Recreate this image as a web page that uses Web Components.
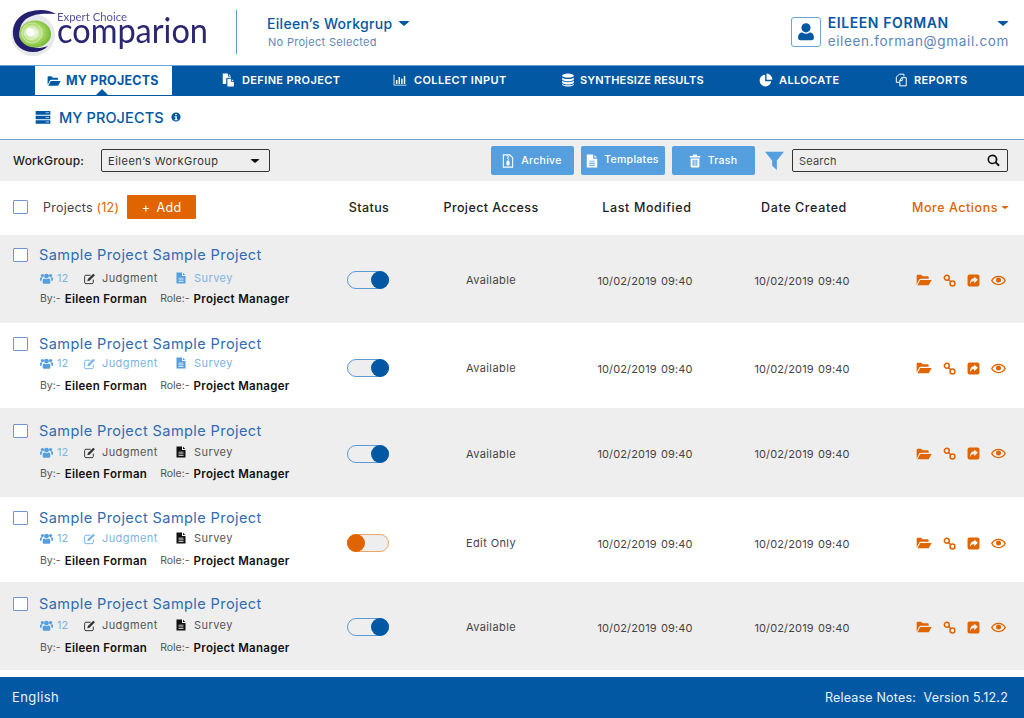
<!DOCTYPE html>
<html lang="en">
<head>
<meta charset="utf-8">
<title>My Projects</title>
<style>
  html, body { margin: 0; padding: 0; background: #fff; }
  body { width: 1024px; height: 718px; overflow: hidden; font-family: Inter, "Open Sans", sans-serif; color: #222; }
</style>
</head>
<body>
<app-header></app-header>
<app-nav>
  <nav-item icon="folder" active>MY PROJECTS</nav-item>
  <nav-item icon="copy">DEFINE PROJECT</nav-item>
  <nav-item icon="bars">COLLECT INPUT</nav-item>
  <nav-item icon="database" style="gap:5px;letter-spacing:.15px">SYNTHESIZE RESULTS</nav-item>
  <nav-item icon="pie" style="gap:6px">ALLOCATE</nav-item>
  <nav-item icon="reports" style="gap:6px">REPORTS</nav-item>
</app-nav>
<page-title>MY PROJECTS</page-title>
<tool-bar></tool-bar>
<list-header></list-header>
<project-row style="--h:88px;--pad:10px;--meta:6px;--by:7px;--shift:2px" shaded judgment="plain" survey="blue" status="Available"></project-row>
<project-row style="--h:85px;--pad:11px;--meta:2px;--by:9px;--shift:5px" judgment="blue" survey="blue" status="Available"></project-row>
<project-row style="--h:89px;--pad:13px;--meta:4px;--by:8px;--shift:2px" shaded judgment="plain" survey="plain" status="Available"></project-row>
<project-row style="--h:85px;--pad:11px;--meta:3px;--by:9px;--shift:7px" judgment="blue" survey="plain" status="Edit Only" off></project-row>
<project-row style="--h:88px;--pad:12px;--meta:4px;--by:9px;--shift:2px" shaded judgment="plain" survey="plain" status="Available"></project-row>
<app-footer></app-footer>

<script>
const ICONS = {
  folder: '<path d="M1 19V5.500A1.500 1.500 0 0 1 2.500 4h5L10 6.500h7.500A1.500 1.500 0 0 1 19 8v2H7a2.500 2.500 0 0 0-2.200 1.300z"/><path d="M6.500 12H23.500l-4.500 8H2z"/>',
  copy: '<path d="M3 1h9v5h5v2h-6a2 2 0 0 0-2 2v9H3z"/><path d="M13.500 1.500l3 3h-3z"/><path d="M11 10h6v5h5v8H11z"/><path d="M18.500 10.500l3 3h-3z"/>',
  bars: '<path d="M1 3h1.500v17H23v1.500H1z"/><path d="M5 12h2.500v7H5zM9.500 7H12v12H9.500zM14 10h2.500v9H14zM18.500 5H21v14h-2.500z"/>',
  database: '<ellipse cx="12" cy="4.500" rx="10" ry="3.500"/><path d="M2 7.500c1.500 2 5.500 2.800 10 2.800s8.500-.8 10-2.800v3.500c-1 2-5.500 3-10 3s-9-1-10-3z"/><path d="M2 13c1.500 2 5.500 2.800 10 2.800s8.500-.8 10-2.800v3.500c-1 2-5.500 3-10 3s-9-1-10-3z"/><path d="M2 18.500c1.500 2 5.500 2.500 10 2.500s8.500-.5 10-2.500V20c-1 2.200-5.500 3-10 3s-9-.8-10-3z"/>',
  pie: '<path d="M10.500 3a10 10 0 1 0 10.500 11H10.500z"/><path d="M13 1v10.500h10A10.500 10.500 0 0 0 13 1z"/>',
  reports: '<g fill="none" stroke="currentColor" stroke-width="1.700"><path d="M9 2h8v4M9 2 4 7v9h5"/><path d="M13 8h8v14H10v-9z"/><path d="M10 13h4V8.500"/></g>',
  server: '<path d="M1 3h22v5.500H1zM1 10h22v5.500H1zM1 17h22v5H1z"/><path d="M16 5h5v1.500h-5zM16 12h5v1.500h-5zM16 18.800h5v1.500h-5z" fill="#fff" opacity=".65"/>',
  info: '<path fill-rule="evenodd" d="M12 1a11 11 0 1 0 0 22 11 11 0 0 0 0-22zM10 4.500h4v3.500h-4zM8.500 10h5.500v7.500h2V20H8.500v-2.500h2v-5h-2z"/>',
  user: '<circle cx="12" cy="7" r="5.500"/><path d="M2.500 19c0-4.500 2.500-6.500 5-6.500 1.500 1 3 1.500 4.500 1.500s3-.5 4.500-1.500c2.500 0 5 2 5 6.500 0 2-1.200 3-3 3h-13c-1.800 0-3-1-3-3z"/>',
  zip: '<g fill="none" stroke="currentColor" stroke-width="1.800"><path d="M4 1.500h11l5 5V22.500H4z"/></g><path d="M10 2h2v2h-2zM12 4h2v2h-2zM10 6h2v2h-2zM12 8h2v2h-2zM10 11h4l1 6a3 3 0 0 1-6 0z"/>',
  doc: '<path fill-rule="evenodd" d="M3 1h11v7h7v15H3zM7 11.500h10V13H7zM7 15h10v1.500H7zM7 18.500h10V20H7z"/><path d="M16 1.500 20.500 6H16z"/>',
  trash: '<path d="M9 1h6l1 2.500h5v2.500H3V3.500h5z"/><path fill-rule="evenodd" d="M4.500 7.500h15V21a2 2 0 0 1-2 2h-11a2 2 0 0 1-2-2zM8 10v10h1.800V10zM11.100 10v10h1.800V10zM14.200 10v10H16V10z"/>',
  filter: '<path d="M0 1h24L15 12v12l-6-5.500V12z"/>',
  search: '<path fill-rule="evenodd" d="M10 1a9 9 0 1 0 5.300 16.300l5.700 5.700 2.500-2.500-5.700-5.700A9 9 0 0 0 10 1zm0 3a6 6 0 1 1 0 12 6 6 0 0 1 0-12z"/>',
  users: '<circle cx="12" cy="7.500" r="4.500"/><circle cx="4.500" cy="6.500" r="3"/><circle cx="19.500" cy="6.500" r="3"/><path d="M5 20v-4.500c0-2 1.500-3.500 3.500-3.500 1 .8 2.200 1.200 3.500 1.200s2.500-.4 3.500-1.200c2 0 3.500 1.500 3.500 3.500V20c0 .8-.7 1.500-1.500 1.500h-11C5.700 21.500 5 20.800 5 20z"/><path d="M0 15v-3c0-1.200 1-2.300 2-2.300.8.500 2 .8 3 .7-.5.600-1 1-1.500 2-.5.800-.5 1.800-.5 3.600H1c-.5 0-1-.4-1-1zM24 15v-3c0-1.200-1-2.300-2-2.300-.8.500-2 .8-3 .7.500.600 1 1 1.500 2 .5.800.5 1.800.5 3.600h2c.5 0 1-.4 1-1z"/>',
  edit: '<path fill="none" stroke="currentColor" stroke-width="1.800" d="M19 14v5a2.500 2.500 0 0 1-2.500 2.500h-11A2.500 2.500 0 0 1 3 19V8.500A2.500 2.500 0 0 1 5.500 6H14"/><path d="M19 3l3 3-10 10-4 1 1-4z"/>',
  link: '<g fill="none" stroke="currentColor" stroke-width="2.800"><circle cx="7" cy="7" r="4.500"/><circle cx="17.500" cy="17.500" r="4.500"/><path d="M10.500 10.500l3.500 3.500"/></g>',
  share: '<path fill-rule="evenodd" d="M4.500 1h15A3.500 3.500 0 0 1 23 4.500v15a3.500 3.500 0 0 1-3.500 3.500h-15A3.500 3.500 0 0 1 1 19.500v-15A3.500 3.500 0 0 1 4.500 1zM13.500 4.500v3.500C9 8 5.500 11 5.500 19c1.500-4.500 4-5.500 8-5.500V17l6.500-6.300z"/>',
  eye: '<path fill-rule="evenodd" d="M12 4.500C6.500 4.500 2.500 7.500 0 12c2.500 4.500 6.500 7.500 12 7.500s9.500-3 12-7.500c-2.500-4.500-6.500-7.500-12-7.500zm0 1.800c4 0 7.500 2.200 9.500 5.700-2 3.500-5.500 5.700-9.500 5.700S4.500 15.500 2.500 12c2-3.500 5.500-5.700 9.500-5.700z"/><circle cx="12" cy="11" r="4"/>'
};

class AppIcon extends HTMLElement {
  connectedCallback() {
    const size = this.getAttribute('size') || 14;
    const name = this.getAttribute('name');
    if (!this.shadowRoot) this.attachShadow({ mode: 'open' });
    this.shadowRoot.innerHTML = `
      <style>
        :host { display: inline-flex; flex: none; }
        svg { display: block; fill: currentColor; }
      </style>
      <svg width="${size}" height="${size}" viewBox="0 0 24 24">${ICONS[name] || ''}</svg>
    `;
  }
}
customElements.define('app-icon', AppIcon);

class CaretDown extends HTMLElement {
  constructor() {
    super();
    this.attachShadow({ mode: 'open' }).innerHTML = `
      <style>
        :host { display: inline-block; flex: none; width: 0; height: 0;
          border-left: var(--s, 6px) solid transparent;
          border-right: var(--s, 6px) solid transparent;
          border-top: calc(var(--s, 6px) * .95) solid currentColor; border-radius: 2px; }
      </style>`;
  }
}
customElements.define('caret-down', CaretDown);

class AppHeader extends HTMLElement {
  constructor() {
    super();
    this.attachShadow({ mode: 'open' }).innerHTML = `
      <style>
        :host { display: flex; align-items: stretch; height: 65px; background: #fff; color: #0358a4; box-sizing: border-box; }
        .logo { display: block; flex: none; width: 236px; height: 65px; filter: blur(.35px); }
        .sep { flex: none; width: 1px; height: 44px; margin-top: 10px; background: #5b9bd5; }
        .wg { margin-left: 30px; padding-top: 15px; }
        .wg .name { display: flex; align-items: center; gap: 6px; font-size: 14px; font-weight: 500; line-height: 17px; letter-spacing: .3px; }
        .wg .sub { margin-top: 3px; margin-left: 1px; font-size: 11px; line-height: 14px; color: #5f88b4; letter-spacing: .3px; }
        .me { margin-left: auto; margin-right: 15px; padding-top: 15px; display: flex; gap: 7px; width: 218px; }
        .avatar { box-sizing: border-box; width: 30px; height: 30px; margin-top: 2px; border: 1px solid #6ea3d8; border-radius: 3px; display: flex; align-items: center; justify-content: center; }
        .who { flex: 1; }
        .who .name { display: flex; justify-content: space-between; align-items: center; font-size: 14px; line-height: 16px; font-weight: 600; letter-spacing: .6px; }
        .who .mail { margin-top: 2px; font-size: 13.500px; line-height: 17px; color: #5a88ba; letter-spacing: .66px; white-space: nowrap; }
      </style>
      <svg class="logo" viewBox="0 0 236 65">
        <defs>
          <radialGradient id="g" cx=".42" cy=".46" r=".6">
            <stop offset="0" stop-color="#fff"/>
            <stop offset=".22" stop-color="#e4f3cf"/>
            <stop offset=".6" stop-color="#a5d65f"/>
            <stop offset="1" stop-color="#6fb530"/>
          </radialGradient>
        </defs>
        <ellipse cx="33" cy="35" rx="22" ry="21" fill="#c9cbd0" opacity=".45"/>
        <path d="M56 14C48 9 38 9 28 12 17 16 12 25 13 35c1 10 9 17 20 17 6 0 11-2 15-6-5 2-11 3-17 0-7-3-11-9-11-15 0-7 5-13 12-15 8-3 16-2 24-2z" fill="#241f6e"/>
        <ellipse cx="35" cy="34" rx="16" ry="13.500" fill="url(#g)"/>
        <g fill="none" stroke="#fff" stroke-opacity=".45">
          <circle cx="31" cy="33" r="6.500"/>
          <circle cx="32" cy="33" r="10"/>
        </g>
        <circle cx="30" cy="32" r="4" fill="#fff" opacity=".95"/>
        <text x="57" y="21" font-family="Lato, 'Open Sans', sans-serif" font-size="11.500" fill="#5551a0" textLength="70" lengthAdjust="spacingAndGlyphs">Expert Choice</text>
        <text x="57" y="43" font-family="Lato, 'Open Sans', sans-serif" font-size="34" fill="#2a2672" textLength="151" lengthAdjust="spacingAndGlyphs">comparion</text>
      </svg>
      <div class="sep"></div>
      <div class="wg">
        <div class="name">Eileen’s Workgrup <caret-down style="--s:6px"></caret-down></div>
        <div class="sub">No Project Selected</div>
      </div>
      <div class="me">
        <div class="avatar"><app-icon name="user" size="20"></app-icon></div>
        <div class="who">
          <div class="name"><span>EILEEN FORMAN</span><caret-down style="--s:6px"></caret-down></div>
          <div class="mail">eileen.forman@gmail.com</div>
        </div>
      </div>
    `;
  }
}
customElements.define('app-header', AppHeader);

class AppNav extends HTMLElement {
  constructor() {
    super();
    this.attachShadow({ mode: 'open' }).innerHTML = `
      <style>
        :host { display: grid; grid-template-columns: 186px 172px 168px 198px 135px 1fr; box-sizing: border-box;
          height: 31px; padding-left: 35px; background: #0358a4; border-top: 1px solid #6ea3d8; }
      </style>
      <slot></slot>
    `;
  }
}
customElements.define('app-nav', AppNav);

class NavItem extends HTMLElement {
  constructor() {
    super();
    this.attachShadow({ mode: 'open' }).innerHTML = `
      <style>
        :host { display: flex; align-items: center; gap: 7px; box-sizing: border-box; height: 30px; padding-bottom: 2px; color: #fff; font-size: 11px; font-weight: 600; letter-spacing: .38px; white-space: nowrap; position: relative; }
        :host([active]) { width: 137px; height: 29px; padding: 0 0 0 12px; gap: 5px;
          background: #fff; color: #0358a4; font-size: 12.500px; font-weight: 700; letter-spacing: .2px; }
        :host([active])::after { content: ""; position: absolute; left: 61px; bottom: 0; border: 6px solid transparent; border-top: 0; border-bottom-color: #0358a4; }
      </style>
      <app-icon></app-icon>
      <slot></slot>
    `;
  }
  connectedCallback() {
    const icon = this.shadowRoot.querySelector('app-icon');
    icon.setAttribute('name', this.getAttribute('icon'));
    icon.setAttribute('size', 14);
    icon.connectedCallback();
  }
}
customElements.define('nav-item', NavItem);

class PageTitle extends HTMLElement {
  constructor() {
    super();
    this.attachShadow({ mode: 'open' }).innerHTML = `
      <style>
        :host { display: flex; align-items: center; box-sizing: border-box; height: 44px; padding: 0 0 1px 35px; color: #0358a4;
          border-bottom: 1px solid #6ea3d8; font-size: 14.500px; font-weight: 500; letter-spacing: .1px; }
        .t { margin-left: 8px; }
        .i { margin-left: 7px; margin-top: -1px; }
      </style>
      <app-icon name="server" size="16"></app-icon>
      <span class="t"><slot></slot></span>
      <app-icon class="i" name="info" size="10"></app-icon>
    `;
  }
}
customElements.define('page-title', PageTitle);

class ToolButton extends HTMLElement {
  constructor() {
    super();
    this.attachShadow({ mode: 'open' }).innerHTML = `
      <style>
        :host { display: flex; align-items: center; justify-content: center; gap: 6px; box-sizing: border-box; width: 83px; height: 29px; padding-right: 2px;
          background: #559fde; color: #fff; border-radius: 2px; font-size: 10.500px; font-weight: 500; letter-spacing: .3px; }
        :host([raised]) { width: 84px; gap: 5px; }
        :host([raised]) span { padding-bottom: 2px; }
      </style>
      <app-icon></app-icon>
      <span><slot></slot></span>
    `;
  }
  connectedCallback() {
    const icon = this.shadowRoot.querySelector('app-icon');
    icon.setAttribute('name', this.getAttribute('icon'));
    icon.setAttribute('size', 14);
    icon.connectedCallback();
  }
}
customElements.define('tool-button', ToolButton);

class ToolBar extends HTMLElement {
  constructor() {
    super();
    this.attachShadow({ mode: 'open' }).innerHTML = `
      <style>
        :host { display: flex; align-items: center; box-sizing: border-box; height: 41px; padding: 0 16px 0 13px; background: #eee; }
        label { font-size: 12px; font-weight: 500; letter-spacing: .2px; color: #222; width: 88px; }
        .field { display: flex; align-items: center; box-sizing: border-box; height: 23px; border: 1px solid #333; border-radius: 2px; background: #eee;
          font-size: 11px; color: #444; letter-spacing: .2px; }
        .select { width: 169px; padding: 0 9px 0 6px; justify-content: space-between; color: #333; letter-spacing: .52px; }
        .btns { margin-left: auto; display: flex; gap: 7px; }
        .filter { margin: 0 8px 0 10px; color: #559fde; }
        .search { width: 216px; padding: 0 7px 0 6px; justify-content: space-between; color: #444; }
        .search app-icon { color: #111; }
      </style>
      <label>WorkGroup:</label>
      <div class="field select"><span>Eileen’s WorkGroup</span><caret-down style="--s:5px;color:#111"></caret-down></div>
      <div class="btns">
        <tool-button icon="zip">Archive</tool-button>
        <tool-button icon="doc" raised>Templates</tool-button>
        <tool-button icon="trash">Trash</tool-button>
      </div>
      <app-icon class="filter" name="filter" size="19"></app-icon>
      <div class="field search"><span>Search</span><app-icon name="search" size="13"></app-icon></div>
    `;
  }
}
customElements.define('tool-bar', ToolBar);

class CheckBox extends HTMLElement {
  constructor() {
    super();
    this.attachShadow({ mode: 'open' }).innerHTML = `
      <style>
        :host { display: block; flex: none; box-sizing: border-box; width: 15px; height: 14px; background: #fff; border: 1px solid #6f97d8; border-radius: 1px; }
      </style>`;
  }
}
customElements.define('check-box', CheckBox);

// column widths shared by the header and the rows
const COLS = '340px 58px 186px 126px 188px 1fr';

class ListHeader extends HTMLElement {
  constructor() {
    super();
    this.attachShadow({ mode: 'open' }).innerHTML = `
      <style>
        :host { display: grid; grid-template-columns: ${COLS}; align-items: center; box-sizing: border-box; height: 54px; padding-bottom: 2px; background: #fff; font-size: 12.500px; font-weight: 500; letter-spacing: .4px; color: #222; }
        .left { display: flex; align-items: center; padding-left: 13px; }
        .p { margin-left: 15px; font-weight: 400; color: #444; letter-spacing: .22px; }
        .n { color: #e06400; }
        .add { margin-left: 8px; width: 69px; height: 24px; display: flex; align-items: center; justify-content: center; gap: 6px; background: #e06400; color: #fff; border-radius: 1px; font-size: 12.500px; font-weight: 400; letter-spacing: .4px; }
        .c { text-align: center; white-space: nowrap; }
        .w { letter-spacing: .62px; }
        .more { display: flex; align-items: center; gap: 3px; padding-left: 14px; color: #e06400; white-space: nowrap; letter-spacing: .55px; }
      </style>
      <div class="left"><check-box></check-box><span class="p">Projects <span class="n">(12)</span></span><div class="add"><span>+</span><span>Add</span></div></div>
      <div class="c">Status</div>
      <div class="c">Project Access</div>
      <div class="c w">Last Modified</div>
      <div class="c w">Date Created</div>
      <div class="more">More Actions <caret-down style="--s:4px"></caret-down></div>
    `;
  }
}
customElements.define('list-header', ListHeader);

class ToggleSwitch extends HTMLElement {
  constructor() {
    super();
    this.attachShadow({ mode: 'open' }).innerHTML = `
      <style>
        :host { display: flex; justify-content: flex-end; box-sizing: border-box; width: 42px; height: 18px; margin-right: 2px; border-radius: 9px; background: var(--track, transparent); border: 1px solid #5b9bd5; }
        :host([off]) { justify-content: flex-start; border-color: #eda566; }
        i { display: block; width: 18px; height: 18px; margin: -1px; border-radius: 50%; background: #0358a4; }
        :host([off]) i { background: #e06400; }
      </style>
      <i></i>`;
  }
}
customElements.define('toggle-switch', ToggleSwitch);

class ProjectRow extends HTMLElement {
  connectedCallback() {
    const off = this.hasAttribute('off') ? ' off' : '';
    const judgment = this.getAttribute('judgment');
    const survey = this.getAttribute('survey');
    this.attachShadow({ mode: 'open' }).innerHTML = `
      <style>
        :host { display: grid; grid-template-columns: ${COLS}; box-sizing: border-box; height: var(--h); background: #fff; color: #444; --track: #eee; }
        :host([shaded]) { background: #eee; --track: transparent; }
        .left { padding: var(--pad) 0 0 13px; }
        .title { display: flex; align-items: center; gap: 11px; font-size: 14.500px; line-height: 20px; color: #2f6cb1; letter-spacing: .42px; white-space: nowrap; }
        .meta { display: flex; align-items: center; margin: var(--meta) 0 0 27px; height: 14px; font-size: 11px; letter-spacing: .42px; white-space: nowrap; }
        .meta span.group { display: flex; align-items: center; gap: 6px; }
        .blue { color: #7db3e6; }
        .count { color: #7db3e6; width: 43px; gap: 4px !important; letter-spacing: 0; }
        .count app-icon { color: #559fde; }
        .judgment { width: 92px; }
        .survey { gap: 7px !important; }
        .plain { color: #555; }
        .plain app-icon { color: #333; }
        .survey.plain app-icon { color: #111; }
        .blue app-icon { color: inherit; }
        .survey.blue app-icon { color: #559fde; }
        .by { display: flex; margin: var(--by) 0 0 27px; height: 14px; line-height: 14px; font-size: 11.500px; letter-spacing: .3px; color: #111; white-space: nowrap; }
        .by .k { color: #555; font-size: 10.500px; letter-spacing: 0; font-weight: 400; margin-right: 4px; }
        .by b { font-weight: 600; }
        .by .r { margin-left: 13px; }
        .c { display: flex; align-items: center; justify-content: center; padding-top: var(--shift); font-size: 11px; letter-spacing: .4px; white-space: nowrap; }
        .d { padding: calc(var(--shift) + 1px) 4px 0 0; letter-spacing: .14px; word-spacing: 1px; }
        .acts { display: flex; align-items: center; gap: 11px; padding: var(--shift) 0 0 18px; color: #e06400; }
      </style>
      <div class="left">
        <div class="title"><check-box></check-box><span>Sample Project Sample Project</span></div>
        <div class="meta">
          <span class="group count"><app-icon name="users" size="13"></app-icon>12</span>
          <span class="group judgment ${judgment}"><app-icon name="edit" size="13"></app-icon>Judgment</span>
          <span class="group survey ${survey}"><app-icon name="doc" size="12"></app-icon>Survey</span>
        </div>
        <div class="by"><span class="k">By:-</span><b>Eileen Forman</b><span class="k r">Role:-</span><b>Project Manager</b></div>
      </div>
      <div class="c"><toggle-switch${off}></toggle-switch></div>
      <div class="c">${this.getAttribute('status')}</div>
      <div class="c d">10/02/2019 09:40</div>
      <div class="c d">10/02/2019 09:40</div>
      <div class="acts">
        <app-icon name="folder" size="16"></app-icon>
        <app-icon name="link" size="13"></app-icon>
        <app-icon name="share" size="13"></app-icon>
        <app-icon name="eye" size="15"></app-icon>
      </div>
    `;
  }
}
customElements.define('project-row', ProjectRow);

class AppFooter extends HTMLElement {
  constructor() {
    super();
    this.attachShadow({ mode: 'open' }).innerHTML = `
      <style>
        :host { display: flex; justify-content: space-between; align-items: center; box-sizing: border-box; height: 41px; margin-top: 7px; padding: 0 16px 0 12px; background: #0358a4; color: #eaf2fa; font-size: 12.500px; letter-spacing: .2px; }
        .l { font-size: 13px; letter-spacing: .4px; padding-bottom: 2px; }
      </style>
      <span class="l">English</span>
      <span>Release Notes:&nbsp; Version 5.12.2</span>
    `;
  }
}
customElements.define('app-footer', AppFooter);
</script>
</body>
</html>
